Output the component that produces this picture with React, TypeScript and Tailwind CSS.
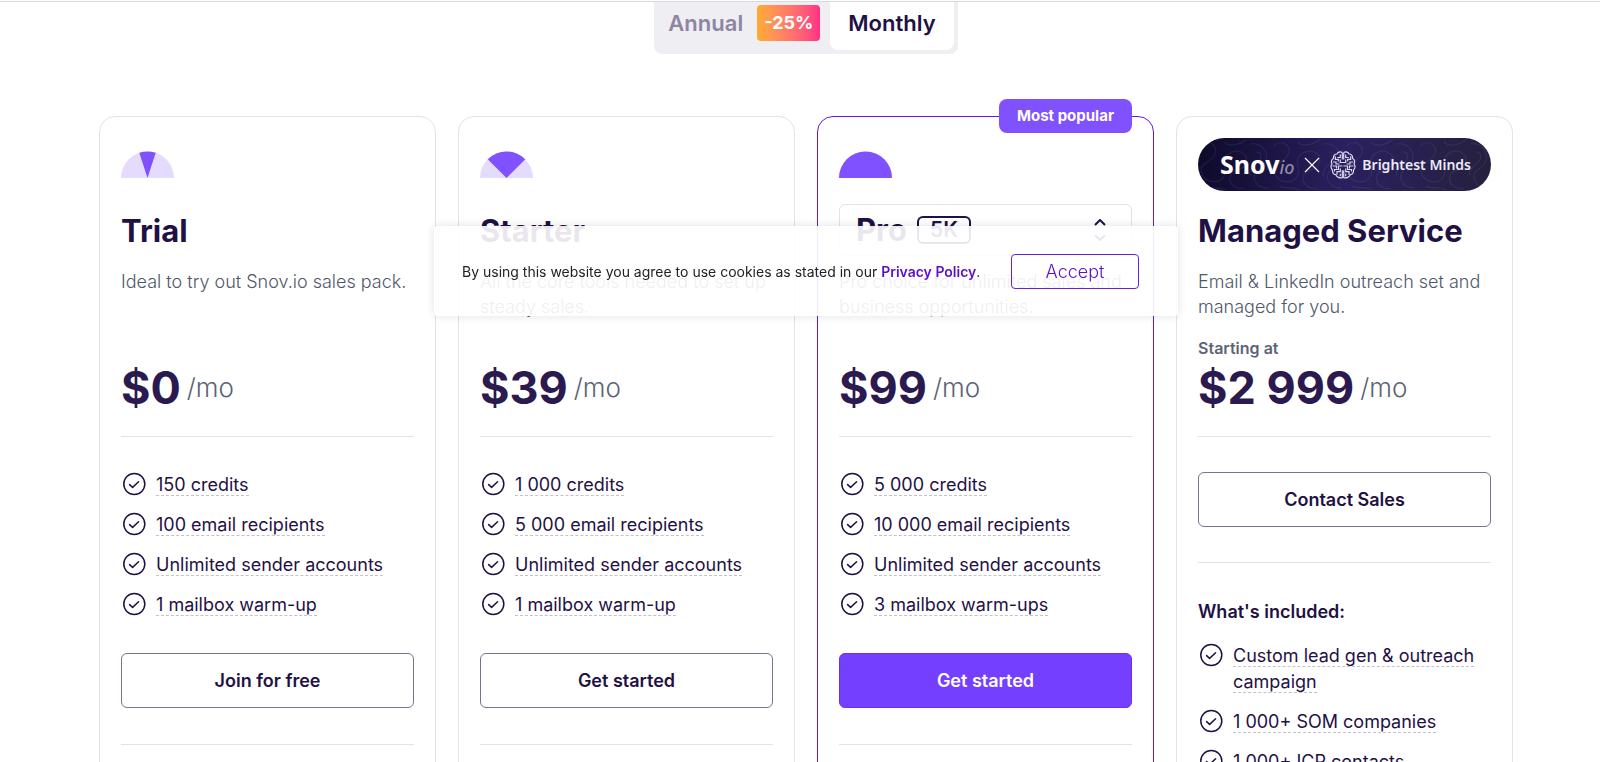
import { useState } from 'react';

interface Plan {
  id: string;
  name: string;
  description: string;
  price: string;
  angle: number;
  features: string[];
  cta: string;
  popular?: boolean;
}

const plans: Plan[] = [
  {
    id: 'trial',
    name: 'Trial',
    description: 'Ideal to try out Snov.io sales pack.',
    price: '$0',
    angle: 18,
    features: ['150 credits', '100 email recipients', 'Unlimited sender accounts', '1 mailbox warm-up'],
    cta: 'Join for free',
  },
  {
    id: 'starter',
    name: 'Starter',
    description: 'All the core tools needed to set up steady sales.',
    price: '$39',
    angle: 45,
    features: ['1 000 credits', '5 000 email recipients', 'Unlimited sender accounts', '1 mailbox warm-up'],
    cta: 'Get started',
  },
  {
    id: 'pro',
    name: 'Pro',
    description: 'Pro choice for unlimited sales and business opportunities.',
    price: '$99',
    angle: 90,
    features: ['5 000 credits', '10 000 email recipients', 'Unlimited sender accounts', '3 mailbox warm-ups'],
    cta: 'Get started',
    popular: true,
  },
];

const managedFeatures = ['Custom lead gen & outreach campaign', '1 000+ SOM companies', '1 000+ ICP contacts'];

// Half-circle gauge, filled symmetrically around the vertical axis
const Gauge = ({ angle }: { angle: number }) => {
  const r = 26.5;
  const rad = (angle * Math.PI) / 180;
  const dx = r * Math.sin(rad);
  const y = 27 - r * Math.cos(rad);

  return (
    <svg width="53" height="27" viewBox="0 0 53 27" aria-hidden="true">
      <path d="M0 27a26.5 26.5 0 0 1 53 0z" fill="#e5dbff" />
      <path d={`M26.5 27L${26.5 - dx} ${y}A${r} ${r} 0 0 1 ${26.5 + dx} ${y}z`} fill="#8051ff" />
    </svg>
  );
};

const CheckIcon = () => (
  <svg className="shrink-0" width="24" height="24" viewBox="0 0 24 24" fill="none" stroke="#1f1144" aria-hidden="true">
    <circle cx="12.3" cy="12" r="10.5" strokeWidth="1.5" />
    <path d="M7.6 12.6l3 2.8 6-5.6" strokeWidth="1.5" strokeLinecap="round" strokeLinejoin="round" />
  </svg>
);

const BrainIcon = () => (
  <svg width="26" height="28" viewBox="0 0 26 28" fill="none" stroke="#dcd9ee" strokeWidth="1.2" aria-hidden="true">
    {['', 'translate(26 0) scale(-1 1)'].map((transform) => (
      <g key={transform} transform={transform}>
        <path d="M12.3 1.5C10 .3 7.6 1.2 7 3 4.5 3 3 5 3.5 7.2 1.5 8.5 1 11 2 13c-1.4 2-1 4.5.5 6-.2 2.5 1 4.3 3.2 4.6.8 2.4 4 3.9 6.6 3v-7.4" />
        <path d="M12.3 1.5v7M10.3 3.5v3h-3M5.3 5.3v3h3v2.2M10.3 8.5v3h2.7M3 11h3v2h3.5M2.5 15h4v2.5M12.5 15H8.5v3.5H4.5v2M10.3 17.5v3.2H7v3M10.3 22.7v2.5" />
      </g>
    ))}
  </svg>
);

const FeatureList = ({ items }: { items: string[] }) => (
  <ul className="flex flex-col gap-[14px] px-[1px]">
    {items.map((item) => (
      <li key={item} className="flex gap-[10px]">
        <CheckIcon />
        <div className="text-[18px] leading-[26px]">
          <span className="border-b border-dashed border-[#c3c1cb]">{item}</span>
        </div>
      </li>
    ))}
  </ul>
);

const Price = ({ value, prefix }: { value: string; prefix?: string }) => (
  <div className="h-[118px] flex flex-col justify-end pb-6 border-b border-[#e3e2e9]">
    {prefix && <span className="mb-2 text-[16px] leading-4 font-semibold text-[#5c6474]">{prefix}</span>}
    <div className="flex items-center gap-[6px]">
      <span className="text-[45px] leading-[48px] font-bold text-[#2b1a4f]">{value}</span>
      <span className="text-[26px] leading-[48px] font-light text-[#5c6474]">/mo</span>
    </div>
  </div>
);

const PlanSelect = ({ name }: { name: string }) => (
  <div className="relative h-[52px] -mt-[7px] -mb-[5px] flex items-center px-4 rounded-md border border-[#e3e2e9]">
    <h2 className="text-[31px] leading-10 font-bold">{name}</h2>
    <span className="ml-[10px] h-7 px-[11px] flex items-center rounded-md border-2 border-[#1f1144] text-[21px] font-semibold">
      5K
    </span>
    <svg className="ml-auto mr-[9px]" width="12" height="22" viewBox="0 0 12 22" fill="none" stroke="#1f1144" strokeWidth="2" aria-hidden="true">
      <path d="M1 6l5-5 5 5M1 16l5 5 5-5" />
    </svg>
    <select aria-label="Pro plan size" className="absolute inset-0 w-full opacity-0">
      <option>Pro 5K</option>
    </select>
  </div>
);

const PlanCard = ({ plan }: { plan: Plan }) => (
  <article
    className={`relative flex flex-col px-[21px] pt-[34px] pb-10 rounded-2xl border ${
      plan.popular ? 'border-[#6414f0]' : 'border-[#e3e2e9]'
    }`}
  >
    {plan.popular && (
      <span className="absolute right-[21px] -top-[18px] px-[18px] rounded-lg bg-[#8051ff] text-white text-[15px] leading-[34px] font-bold">
        Most popular
      </span>
    )}
    <Gauge angle={plan.angle} />
    <div className="mt-[33px]">
      {plan.popular ? <PlanSelect name={plan.name} /> : <h2 className="text-[31px] leading-10 font-bold">{plan.name}</h2>}
    </div>
    <p className="mt-[18px] h-[50px] text-[18px] leading-[25px] font-light text-[#4f586a]">{plan.description}</p>
    <Price value={plan.price} />
    <div className="mt-[35px]">
      <FeatureList items={plan.features} />
    </div>
    <button
      className={`mt-[35px] h-[55px] rounded-md border text-[18px] font-semibold ${
        plan.popular ? 'bg-[#753fff] border-[#6a2ff0] text-white' : 'border-[#7b7094]'
      }`}
    >
      {plan.cta}
    </button>
    <hr className="mt-9 border-[#e3e2e9]" />
  </article>
);

const PartnerBanner = () => (
  <div className="relative h-[53px] pl-[22px] pr-5 flex items-center justify-between overflow-hidden rounded-full bg-gradient-to-r from-[#0f0b2b] via-[#2b2160] to-[#26213f] text-white font-['Noto_Sans',sans-serif]">
    <svg
      className="absolute inset-0 w-full h-full opacity-10"
      viewBox="0 0 292 53"
      preserveAspectRatio="none"
      fill="none"
      stroke="#b9aef5"
      aria-hidden="true"
    >
      {[0, 73, 146, 219].map((x) => (
        <path
          key={x}
          transform={`translate(${x} 0)`}
          d="M2 8c10-9 20 2 14 10s-16 8-12 18 18 10 22 2-4-16 4-22 20-2 18 8-14 6-16 14 6 14 14 12M26 4c6 6 16 2 22-2M52 6c10-2 18 6 16 16s-12 8-12 16 6 12 14 12M8 48c8 4 14 0 20 4M58 14c6 0 6 6 2 10s-10 8-8 14"
        />
      ))}
    </svg>
    <span className="relative text-[25px] font-bold">
      Snov<span className="text-[18px] font-medium italic text-[#8f8ba8]">io</span>
    </span>
    <svg className="relative" width="16" height="16" viewBox="0 0 16 16" stroke="#fff" strokeWidth="1.2" aria-hidden="true">
      <path d="M1 1l14 14M15 1L1 15" />
    </svg>
    <span className="relative flex items-center gap-[6px] text-[14px] font-semibold text-[#eceaf6]">
      <BrainIcon />
      Brightest Minds
    </span>
  </div>
);

const ManagedCard = () => (
  <article className="flex flex-col px-[21px] pt-[21px] pb-10 rounded-2xl border border-[#e3e2e9]">
    <PartnerBanner />
    <h2 className="mt-5 text-[31px] leading-10 font-bold whitespace-nowrap">Managed Service</h2>
    <p className="mt-[18px] h-[50px] text-[18px] leading-[25px] font-light text-[#4f586a]">
      Email &amp; LinkedIn outreach set and managed for you.
    </p>
    <Price value="$2 999" prefix="Starting at" />
    <button className="mt-[35px] h-[55px] rounded-md border border-[#7b7094] text-[18px] font-semibold">
      Contact Sales
    </button>
    <hr className="mt-[35px] border-[#e3e2e9]" />
    <h3 className="mt-9 mb-[18px] text-[18px] leading-[26px] font-semibold">What's included:</h3>
    <FeatureList items={managedFeatures} />
  </article>
);

const PeriodSwitch = () => (
  <div className="flex justify-center">
    <div className="flex items-start h-[52px] pl-[14px] pr-1 rounded-b-lg bg-[#efeef3] text-[22px] font-semibold">
      <button className="flex items-center gap-[14px] h-[42px] text-[#8c86a3]">
        Annual
        <span className="px-[7px] rounded bg-gradient-to-r from-[#ffab2e] to-[#ff2e86] text-white text-[18px] leading-9 font-bold">
          -25%
        </span>
      </button>
      <button className="ml-[10px] h-12 px-[18px] pb-[6px] rounded-b-lg bg-white">Monthly</button>
    </div>
  </div>
);

const CookieBanner = ({ onAccept }: { onAccept: () => void }) => (
  <div className="fixed inset-x-0 top-[226px] pl-[99px] pr-[87px] flex justify-center">
    <div className="w-[744px] h-[90px] pl-7 pr-[39px] flex items-center justify-between rounded bg-white/90 shadow-[0_0_10px_rgba(0,0,0,0.12)] text-[14px] text-[#222]">
      <p>
        By using this website you agree to use cookies as stated in our{' '}
        <a href="#privacy" className="font-semibold text-[#5b0fc9]">
          Privacy Policy
        </a>
        .
      </p>
      <button onClick={onAccept} className="w-32 h-[35px] rounded border border-[#6a1fe0] text-[18px] font-light text-[#5b0fc9]">
        Accept
      </button>
    </div>
  </div>
);

const App = () => {
  const [accepted, setAccepted] = useState(false);

  return (
    <div className="h-screen overflow-hidden bg-white text-[#1f1144] font-['Inter',sans-serif]">
      <main className="border-t border-[#d9d9de] mt-px pl-[99px] pr-[87px]">
        <PeriodSwitch />
        <div className="mt-[62px] grid grid-cols-4 gap-[22px]">
          {plans.map((plan) => (
            <PlanCard key={plan.id} plan={plan} />
          ))}
          <ManagedCard />
        </div>
      </main>
      {!accepted && <CookieBanner onAccept={() => setAccepted(true)} />}
    </div>
  );
};

export default App;
